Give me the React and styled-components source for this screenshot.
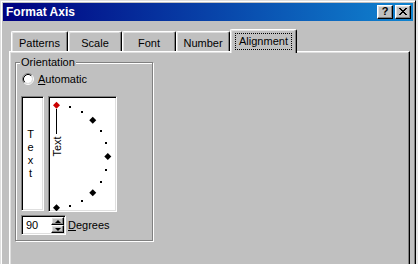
import React from 'react'
import styled, { createGlobalStyle, css } from 'styled-components'

const face = '#c0c0c0'
const shadow = '#808080'
const light = '#dfdfdf'
const ui = `'Liberation Sans', Arial, sans-serif`

const GlobalStyle = createGlobalStyle`
  html, body {
    margin: 0;
    padding: 0;
    background: #e6e6e6;
    overflow: hidden;
  }
  body {
    font-family: ${ui};
    font-size: 11px;
    color: #000;
  }
`

const raised = css`
  box-sizing: border-box;
  background: ${face};
  border: 1px solid;
  border-color: #fff #000 #000 #fff;
  box-shadow: inset -1px -1px ${shadow}, inset 1px 1px ${light};
`

const sunken = css`
  box-sizing: border-box;
  background: #fff;
  border: 1px solid;
  border-color: ${shadow} #fff #fff ${shadow};
  box-shadow: inset 1px 1px #000, inset -1px -1px ${light};
`

const Screen = styled.div`
  display: flex;
  width: 418px;
  height: 264px;
  overflow: hidden;
`

const Dialog = styled.div`
  box-sizing: border-box;
  flex: none;
  width: 416px;
  height: 300px;
  padding: 2px;
  background: ${face};
  border: 1px solid;
  border-color: ${light} #000 #000 ${light};
  box-shadow: inset 1px 1px #fff, inset -1px -1px ${shadow};
  display: flex;
  flex-direction: column;
`

const TitleBar = styled.div`
  height: 18px;
  flex: none;
  display: flex;
  align-items: center;
  padding: 0 2px 0 3px;
  background: linear-gradient(to right, #000080, #1084d0);
`

const Title = styled.span`
  color: #fff;
  font-weight: bold;
  font-size: 12px;
  line-height: 14px;
`

const CaptionButtons = styled.div`
  margin-left: auto;
  display: flex;
  gap: 2px;
`

const CaptionButton = styled.div`
  ${raised};
  width: 16px;
  height: 14px;
  display: flex;
  align-items: center;
  justify-content: center;
  font-weight: bold;
  font-size: 11px;
  line-height: 11px;
  padding-bottom: 1px;
`

const TabRow = styled.div`
  display: flex;
  align-items: flex-end;
  height: 22px;
  margin-top: 8px;
  padding-left: 8px;
  flex: none;
`

const Tab = styled.div`
  box-sizing: border-box;
  position: relative;
  z-index: ${p => (p.$active ? 1 : 0)};
  width: ${p => p.$w}px;
  height: ${p => (p.$active ? 24 : 20)}px;
  margin-bottom: ${p => (p.$active ? -2 : 0)}px;
  padding-top: 5px;
  display: flex;
  justify-content: center;
  align-items: flex-start;
  background: ${face};
  border-top: 1px solid #fff;
  border-left: 1px solid #fff;
  border-right: 1px solid #000;
  border-radius: 2px 2px 0 0;
  box-shadow: inset -1px 0 ${shadow}, inset 1px 1px ${light};
  line-height: 13px;
  white-space: nowrap;
`

const FocusLabel = styled.span`
  display: inline-block;
  margin-top: -1px;
  padding: 1px 3px;
  outline: 1px dotted #000;
  line-height: 13px;
`

const Panel = styled.div`
  box-sizing: border-box;
  flex: 1;
  margin: 0 3px 0 6px;
  padding: 10px 0 0 5px;
  background: ${face};
  border-top: 1px solid #fff;
  border-left: 1px solid #fff;
  border-right: 1px solid #000;
  box-shadow: inset -1px 0 ${shadow}, inset 1px 1px ${light};
`

const Group = styled.div`
  box-sizing: border-box;
  position: relative;
  width: 138px;
  height: 179px;
  padding: 10px 0 0 5px;
  border: 1px solid ${shadow};
  box-shadow: inset 1px 1px #fff, 1px 1px #fff;
`

const Legend = styled.span`
  position: absolute;
  left: 4px;
  top: -7px;
  padding: 0 1px;
  background: ${face};
  line-height: 13px;
`

const RadioRow = styled.label`
  display: flex;
  align-items: center;
  gap: 4px;
  height: 12px;
  padding-left: 1px;
  line-height: 13px;
`

const Boxes = styled.div`
  display: flex;
  gap: 4px;
  margin-top: 11px;
`

const TextStack = styled.div`
  ${sunken};
  width: 23px;
  height: 115px;
  padding-right: 4px;
  display: flex;
  flex-direction: column;
  align-items: center;
  justify-content: center;
  line-height: 13px;
`

const Dial = styled.div`
  ${sunken};
  width: 69px;
  height: 116px;
  padding: 2px;
  svg {
    display: block;
  }
`

const SpinRow = styled.div`
  display: flex;
  align-items: center;
  gap: 2px;
  margin-top: 3px;
`

const SpinField = styled.div`
  ${sunken};
  width: 45px;
  height: 20px;
  padding: 2px 1px 2px 4px;
  display: flex;
  align-items: center;
  line-height: 13px;
`

const SpinValue = styled.span`
  flex: 1;
`

const SpinArrows = styled.div`
  display: flex;
  flex-direction: column;
  width: 13px;
  height: 16px;
`

const ArrowButton = styled.div`
  ${raised};
  flex: 1;
  display: flex;
  align-items: center;
  justify-content: center;
  &::after {
    content: '';
    width: 0;
    height: 0;
    border-left: 3px solid transparent;
    border-right: 3px solid transparent;
    ${p =>
      p.$down
        ? 'border-top: 3px solid #000;'
        : 'border-bottom: 3px solid #000;'}
  }
`

const tabs = [
  { label: 'Patterns', w: 57 },
  { label: 'Scale', w: 54 },
  { label: 'Font', w: 54 },
  { label: 'Number', w: 54 },
  { label: 'Alignment', w: 67, active: true }
]

const CloseGlyph = () => (
  <svg width="8" height="7" viewBox="0 0 8 7" shapeRendering="crispEdges">
    {[0, 1, 2, 3, 4, 5, 6].map(i => (
      <g key={i} fill="#000">
        <rect x={i} y={i} width="2" height="1" />
        <rect x={6 - i} y={i} width="2" height="1" />
      </g>
    ))}
  </svg>
)

const RadioIcon = () => (
  <svg width="12" height="12" viewBox="0 0 12 12">
    <circle cx="6" cy="6" r="4" fill="#fff" />
    <path d="M2.11 9.89 A5.5 5.5 0 0 1 9.89 2.11" fill="none" stroke={shadow} />
    <path d="M9.89 2.11 A5.5 5.5 0 0 1 2.11 9.89" fill="none" stroke="#fff" />
    <path d="M2.82 9.18 A4.5 4.5 0 0 1 9.18 2.82" fill="none" stroke="#000" />
    <path d="M9.18 2.82 A4.5 4.5 0 0 1 2.82 9.18" fill="none" stroke={light} />
  </svg>
)

const OrientationDial = () => {
  const cx = 5.5
  const cy = 57.5
  const r = 51.3
  const marks = []
  for (let a = 90; a >= -90; a -= 15) {
    const rad = (a * Math.PI) / 180
    const x = cx + r * Math.cos(rad)
    const y = cy - r * Math.sin(rad)
    if (a % 45 === 0) {
      const s = 3.5
      marks.push(
        <polygon
          key={a}
          points={`${x},${y - s} ${x + s},${y} ${x},${y + s} ${x - s},${y}`}
          fill={a === 90 ? '#cc0000' : '#000'}
        />
      )
    } else {
      marks.push(
        <rect key={a} x={Math.round(x) - 1} y={Math.round(y) - 1} width="2" height="2" fill="#000" />
      )
    }
  }
  return (
    <svg width="65" height="112" viewBox="0 0 65 112">
      <line x1={cx} y1="10" x2={cx} y2="35" stroke="#000" strokeWidth="1" />
      <text
        transform={`translate(10 57.5) rotate(-90)`}
        fontFamily="Liberation Sans, Arial, sans-serif"
        fontSize="11"
        fill="#000"
      >
        Text
      </text>
      {marks}
    </svg>
  )
}

export default function App() {
  return (
    <Screen>
      <GlobalStyle />
      <Dialog>
        <TitleBar>
          <Title>Format Axis</Title>
          <CaptionButtons>
            <CaptionButton>?</CaptionButton>
            <CaptionButton>
              <CloseGlyph />
            </CaptionButton>
          </CaptionButtons>
        </TitleBar>
        <TabRow>
          {tabs.map(t => (
            <Tab key={t.label} $w={t.w} $active={t.active}>
              {t.active ? <FocusLabel>{t.label}</FocusLabel> : t.label}
            </Tab>
          ))}
        </TabRow>
        <Panel>
          <Group>
            <Legend>Orientation</Legend>
            <RadioRow>
              <RadioIcon />
              <span>
                <u>A</u>utomatic
              </span>
            </RadioRow>
            <Boxes>
              <TextStack>
                <span>T</span>
                <span>e</span>
                <span>x</span>
                <span>t</span>
              </TextStack>
              <Dial>
                <OrientationDial />
              </Dial>
            </Boxes>
            <SpinRow>
              <SpinField>
                <SpinValue>90</SpinValue>
                <SpinArrows>
                  <ArrowButton />
                  <ArrowButton $down />
                </SpinArrows>
              </SpinField>
              <span>
                <u>D</u>egrees
              </span>
            </SpinRow>
          </Group>
        </Panel>
      </Dialog>
    </Screen>
  )
}
